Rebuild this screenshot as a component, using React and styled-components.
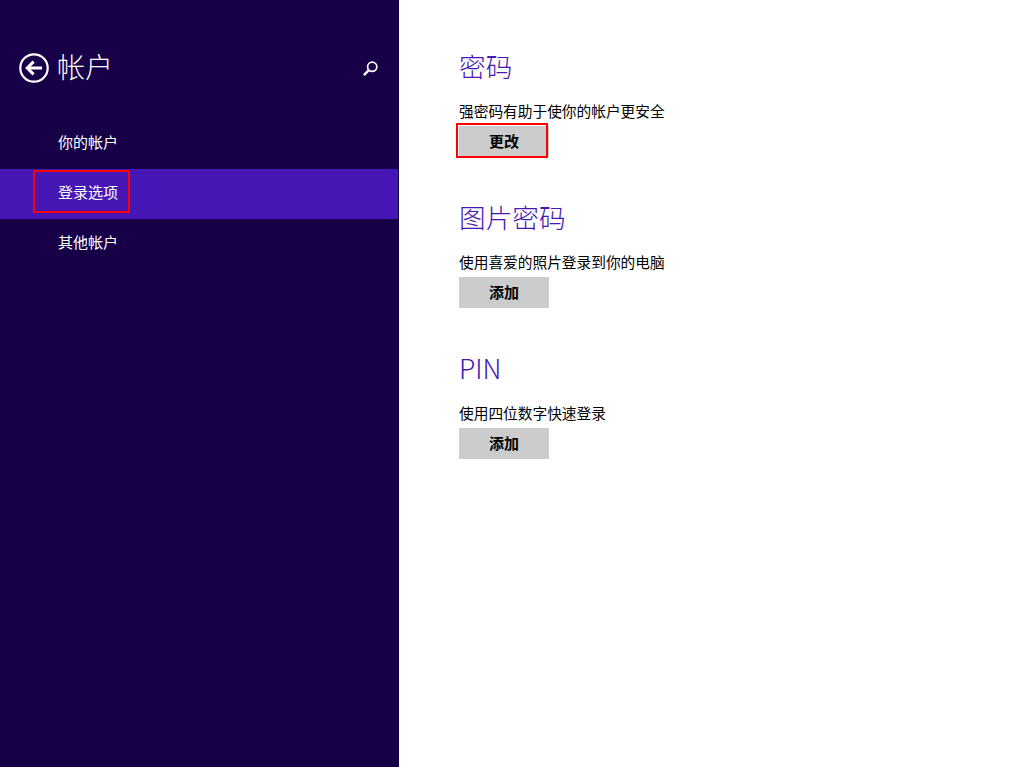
import React from 'react'
import styled, { createGlobalStyle } from 'styled-components'

const FONT = `"Noto Sans CJK SC", "Noto Sans", sans-serif`

const Global = createGlobalStyle`
  html, body {
    margin: 0;
    height: 100%;
    background: #fff;
    font-family: ${FONT};
  }
`

const Page = styled.div`
  display: flex;
  width: 1023px;
  height: 767px;
  overflow: hidden;
`

const Sidebar = styled.aside`
  width: 399px;
  flex: none;
  background: #180048;
  color: #fff;
`

const Header = styled.header`
  display: flex;
  align-items: center;
  height: 46px;
  margin-top: 45px;
  margin-bottom: 28px;
  padding: 0 19px;
`

const BackIcon = styled.svg`
  width: 30px;
  height: 30px;
  flex: none;
`

const Title = styled.h1`
  margin: 0 0 4px 8px;
  font-size: 28px;
  font-weight: 300;
  line-height: 38px;
`

const SearchIcon = styled.svg`
  width: 16px;
  height: 16px;
  margin-left: auto;
  margin-right: 1px;
`

const Nav = styled.nav`
  display: flex;
  flex-direction: column;
`

const NavItem = styled.div`
  position: relative;
  display: flex;
  align-items: center;
  width: ${p => (p.$active ? '398px' : 'auto')};
  height: 50px;
  padding: 0 0 6px 58px;
  box-sizing: border-box;
  font-size: 15px;
  background: ${p => (p.$active ? '#4617b4' : 'transparent')};
`

const NavMark = styled.span`
  position: absolute;
  left: 33px;
  top: 1px;
  width: 97px;
  height: 43px;
  box-sizing: border-box;
  border: 2px solid #ff0000;
`

const Content = styled.main`
  flex: 1;
  padding: 45px 0 0 60px;
`

const Section = styled.section`
  height: 151px;
`

const Heading = styled.h2`
  margin: 0;
  height: 42px;
  font-size: 26.67px;
  font-weight: 300;
  line-height: 42px;
  color: #4617b4;
`

const Description = styled.p`
  margin: 0;
  padding-top: 13px;
  height: 22px;
  font-size: 14.7px;
  line-height: 22px;
  color: #000;
`

const ButtonWrap = styled.div`
  position: relative;
  width: 90px;
  margin-top: 4px;
`

const Button = styled.button`
  display: block;
  width: 90px;
  height: 31px;
  padding: 0 0 2px;
  border: 0;
  background: #cccccc;
  color: #000;
  font-family: ${FONT};
  font-size: 15px;
  font-weight: 700;
`

const ButtonMark = styled.span`
  position: absolute;
  left: -3px;
  top: -3px;
  width: 92px;
  height: 35px;
  box-sizing: border-box;
  border: 2px solid #ff0000;
`

const sections = [
  { title: '密码', text: '强密码有助于使你的帐户更安全', action: '更改', marked: true },
  { title: '图片密码', text: '使用喜爱的照片登录到你的电脑', action: '添加' },
  { title: 'PIN', text: '使用四位数字快速登录', action: '添加' },
]

const items = ['你的帐户', '登录选项', '其他帐户']

const App = () => {
  return (
    <Page>
      <Global />
      <Sidebar>
        <Header>
          <BackIcon viewBox="0 0 30 30" fill="none" stroke="#fff">
            <circle cx="15" cy="15" r="13.7" strokeWidth="2.2" />
            <path d="M23 15H9" strokeWidth="3" />
            <path d="M14.6 8.6L8.2 15L14.6 21.4" strokeWidth="3" />
          </BackIcon>
          <Title>帐户</Title>
          <SearchIcon viewBox="0 0 16 16" fill="none" stroke="#fff">
            <circle cx="9.2" cy="6.8" r="4.6" strokeWidth="1.7" />
            <path d="M5.8 10.2L0.9 15.1" strokeWidth="2.4" />
          </SearchIcon>
        </Header>
        <Nav>
          {items.map((item, i) => (
            <NavItem key={item} $active={i === 1}>
              {item}
              {i === 1 && <NavMark />}
            </NavItem>
          ))}
        </Nav>
      </Sidebar>
      <Content>
        {sections.map(s => (
          <Section key={s.title}>
            <Heading>{s.title}</Heading>
            <Description>{s.text}</Description>
            <ButtonWrap>
              <Button>{s.action}</Button>
              {s.marked && <ButtonMark />}
            </ButtonWrap>
          </Section>
        ))}
      </Content>
    </Page>
  )
}

export default App
